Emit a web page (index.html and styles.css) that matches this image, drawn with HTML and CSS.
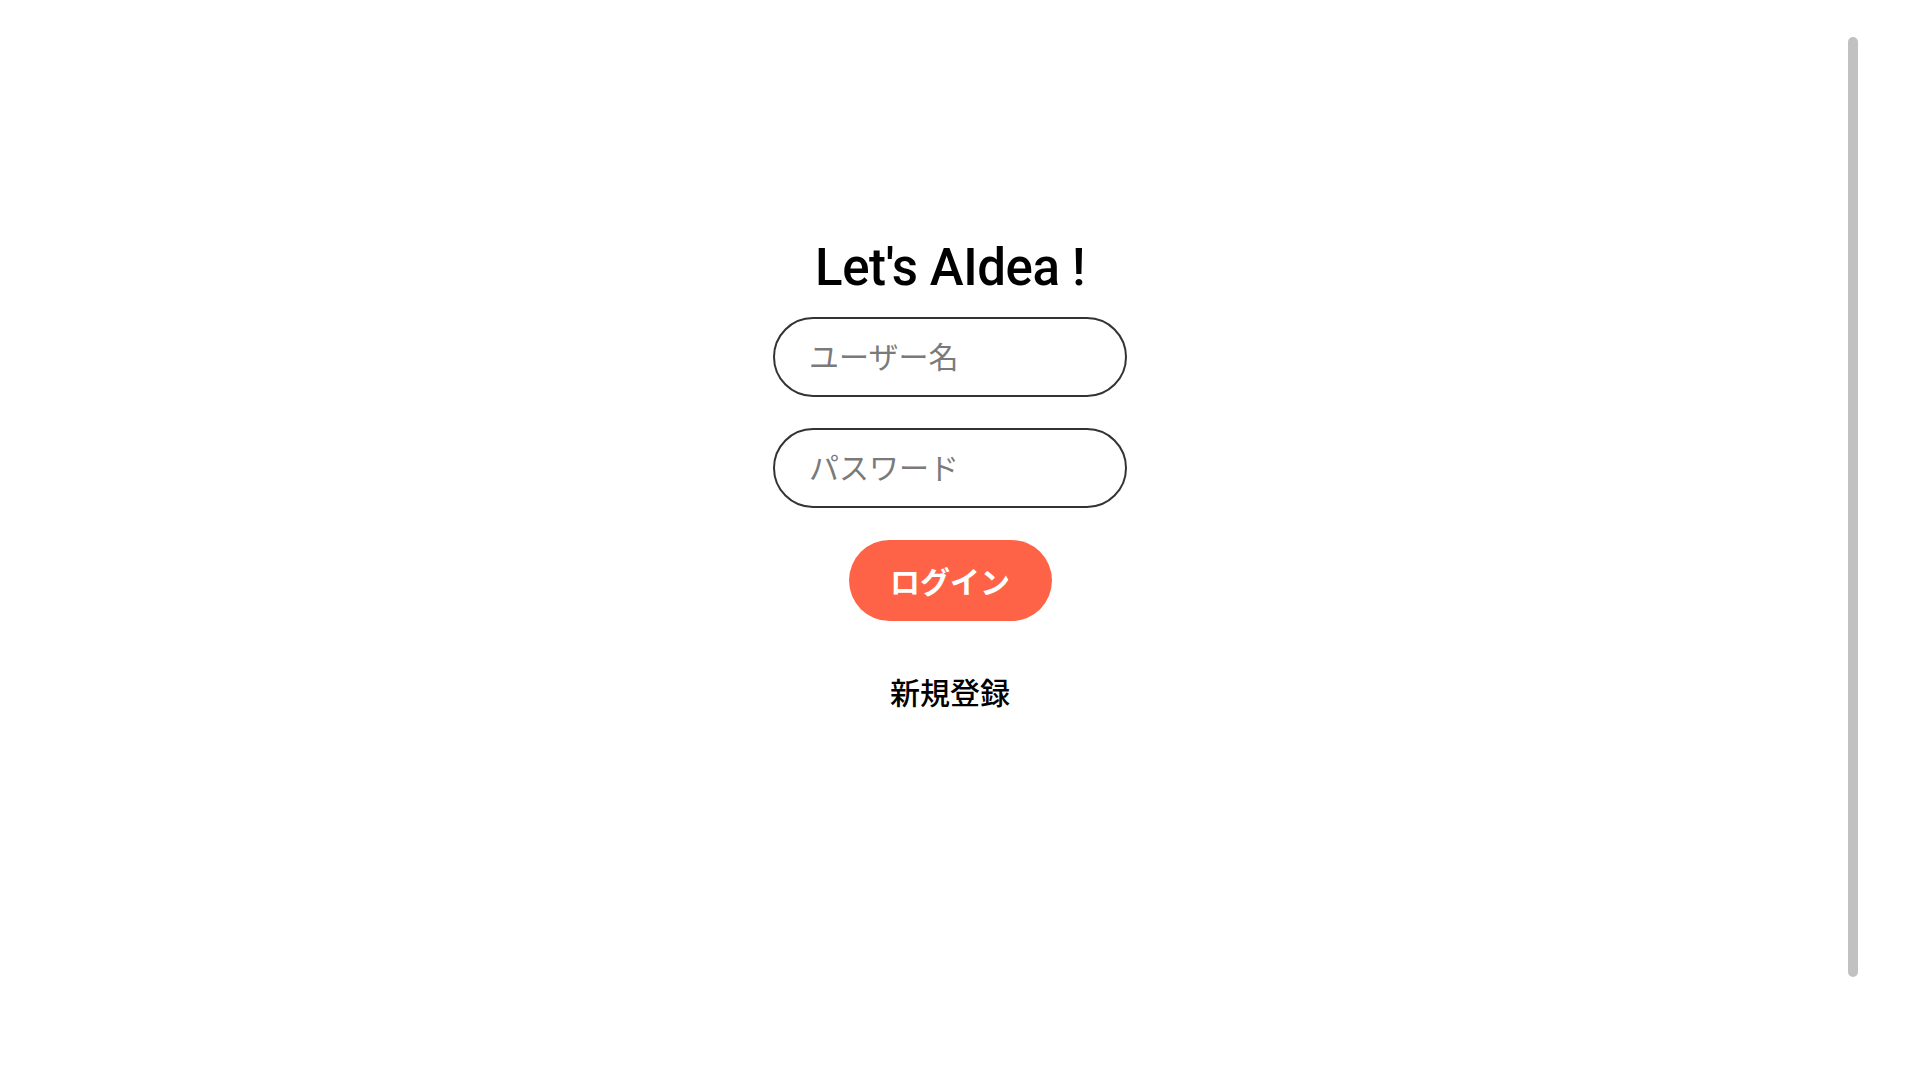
FILE: index.html
```html
<!DOCTYPE html>
<html lang="ja">
<head>
<meta charset="utf-8">
<title>Let's AIdea !</title>
<link rel="stylesheet" href="styles.css">
</head>
<body>
<main class="page">
  <form class="login">
    <h1 class="title">Let's AIdea !</h1>
    <input class="field" type="text" placeholder="ユーザー名" autofocus>
    <input class="field" type="password" placeholder="パスワード">
    <button class="btn" type="button">ログイン</button>
    <a class="signup" href="#">新規登録</a>
  </form>
</main>
<div class="scrollbar"></div>
</body>
</html>
```
FILE: styles.css
```css
html, body {
  margin: 0;
  padding: 0;
  background: #ffffff;
  height: 100%;
}
body {
  font-family: Roboto, "Noto Sans CJK JP", sans-serif;
  color: #000;
  overflow: hidden;
}
.page {
  width: 1900px;
  display: flex;
  justify-content: center;
  padding-top: 237px;
}
.login {
  display: flex;
  flex-direction: column;
  align-items: center;
}
.title {
  margin: 0 0 18px;
  font-family: Roboto, sans-serif;
  font-weight: 500;
  font-size: 51px;
  line-height: 62px;
  letter-spacing: -0.4px;
}
.field {
  box-sizing: border-box;
  width: 354px;
  height: 80px;
  margin: 0 0 31px;
  padding: 0 0 4px 34px;
  border: 2px solid #333;
  border-radius: 40px;
  font-family: "Noto Sans CJK JP", sans-serif;
  font-size: 30px;
  color: #000;
  caret-color: #000;
  outline: none;
  background: #fff;
}
.field::placeholder {
  color: #7a7a7a;
}
.btn {
  width: 203px;
  height: 81px;
  margin-top: 1px;
  border: none;
  border-radius: 41px;
  background: #ff6347;
  color: #fff;
  font-family: "Noto Sans CJK JP", sans-serif;
  font-weight: 700;
  font-size: 30px;
  cursor: pointer;
  padding: 0 0 2px;
}
.signup {
  margin-top: 50px;
  font-family: "Noto Sans CJK JP", sans-serif;
  font-weight: 500;
  font-size: 30px;
  line-height: 40px;
  color: #000;
  text-decoration: none;
}
.scrollbar {
  position: absolute;
  left: 1848px;
  top: 37px;
  width: 10px;
  height: 940px;
  border-radius: 5px;
  background: #c1c1c1;
}
```
